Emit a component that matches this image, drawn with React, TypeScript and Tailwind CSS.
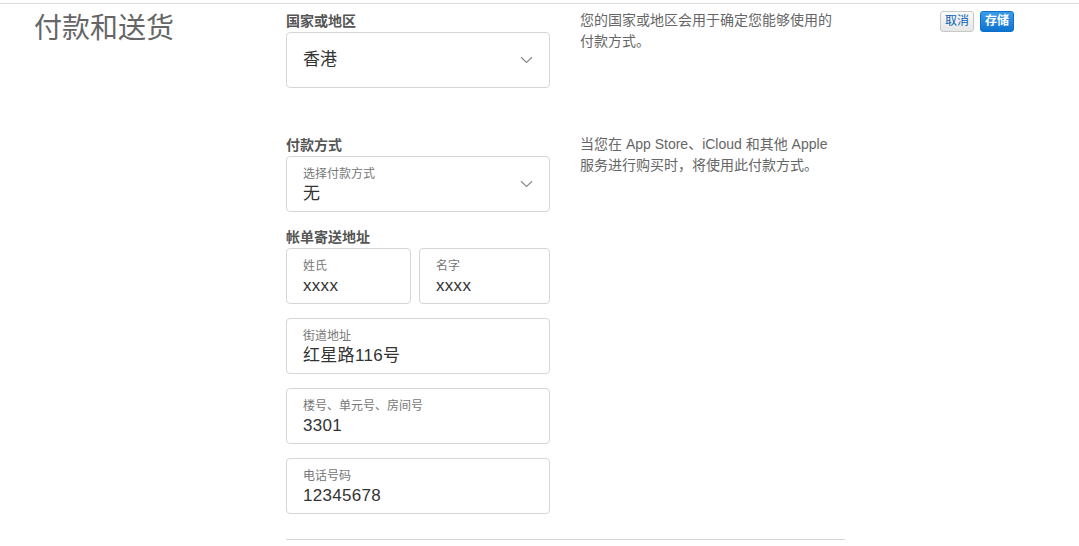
import React from 'react';

const font = { fontFamily: '"Liberation Sans", "Noto Sans CJK SC", sans-serif' };

const Chevron = () => (
  <svg width="13" height="8" viewBox="0 0 13 8" fill="none" className="text-[#8a8a8a]">
    <path d="M1 1.2 L6.5 6.5 L12 1.2" stroke="currentColor" strokeWidth="1.2" />
  </svg>
);

const Field = ({ label, value, className = '' }: { label: string; value: string; className?: string }) => (
  <div className={`h-[56px] rounded-[4px] border border-[#d6d6d6] bg-white pl-[16px] pt-[9px] ${className}`}>
    <div className="text-[12px] leading-[16px] text-[#777]">{label}</div>
    <div className="mt-[2px] text-[17px] leading-[20px] tracking-[0.3px] text-[#333]">{value}</div>
  </div>
);

const SectionLabel = ({ children }: { children: React.ReactNode }) => (
  <div className="text-[14px] font-bold leading-[18px] text-[#555]">{children}</div>
);

const Description = ({ children }: { children: React.ReactNode }) => (
  <p className="w-[265px] text-[14px] leading-[21px] text-[#666]">{children}</p>
);

export default function App() {
  return (
    <div className="min-h-[546px] w-full bg-white" style={font}>
      <div className="pt-[3px]">
        <div className="border-t border-[#dcdcdc]" />
      </div>
      <div className="flex">
        {/* titre */}
        <div className="w-[286px] shrink-0 pl-[34px] pt-[8px]">
          <h1 className="text-[28px] leading-[34px] text-[#666]">付款和送货</h1>
        </div>

        <div className="w-[559px] shrink-0">
          {/* pays */}
          <div className="flex gap-[30px] pt-[8px]">
            <div className="w-[264px] shrink-0">
              <SectionLabel>国家或地区</SectionLabel>
              <div className="mt-[2px] flex h-[56px] items-center justify-between rounded-[4px] border border-[#d6d6d6] pl-[16px] pr-[16px]">
                <span className="text-[17px] text-[#333]">香港</span>
                <Chevron />
              </div>
            </div>
            <div className="-mt-[2px]">
              <Description>您的国家或地区会用于确定您能够使用的付款方式。</Description>
            </div>
          </div>

          {/* paiement */}
          <div className="mt-[48px] flex gap-[30px]">
            <div className="w-[264px] shrink-0">
              <SectionLabel>付款方式</SectionLabel>
              <div className="mt-[2px] flex h-[56px] items-center justify-between rounded-[4px] border border-[#d6d6d6] pl-[16px] pr-[16px]">
                <div className="pt-[1px]">
                  <div className="text-[12px] leading-[16px] text-[#777]">选择付款方式</div>
                  <div className="mt-[2px] text-[17px] leading-[20px] text-[#333]">无</div>
                </div>
                <Chevron />
              </div>
            </div>
            <div className="-mt-[2px]">
              <Description>当您在 App Store、iCloud 和其他 Apple 服务进行购买时，将使用此付款方式。</Description>
            </div>
          </div>

          {/* adresse */}
          <div className="mt-[16px] w-[264px]">
            <SectionLabel>帐单寄送地址</SectionLabel>
            <div className="mt-[2px] flex gap-[8px]">
              <Field label="姓氏" value="xxxx" className="w-[125px]" />
              <Field label="名字" value="xxxx" className="flex-1" />
            </div>
            <div className="mt-[14px] flex flex-col gap-[14px]">
              <Field label="街道地址" value="红星路116号" />
              <Field label="楼号、单元号、房间号" value="3301" />
              <Field label="电话号码" value="12345678" />
            </div>
          </div>

          <div className="mt-[25px] border-t border-[#d6d6d6]" />
        </div>

        {/* boutons */}
        <div className="ml-auto flex gap-[6px] pr-[65px] pt-[7px]">
          <button className="h-[21px] rounded-[3px] border border-[#c8c8c8] bg-gradient-to-b from-[#fafafa] to-[#e6e6e6] px-[4px] text-[12px] leading-[19px] text-[#0a5fb8]">
            取消
          </button>
          <button className="h-[21px] rounded-[3px] border border-[#0a6fc9] bg-gradient-to-b from-[#3b9be8] to-[#0a74d0] px-[4px] text-[12px] font-bold leading-[19px] text-white">
            存储
          </button>
        </div>
      </div>
    </div>
  );
}
